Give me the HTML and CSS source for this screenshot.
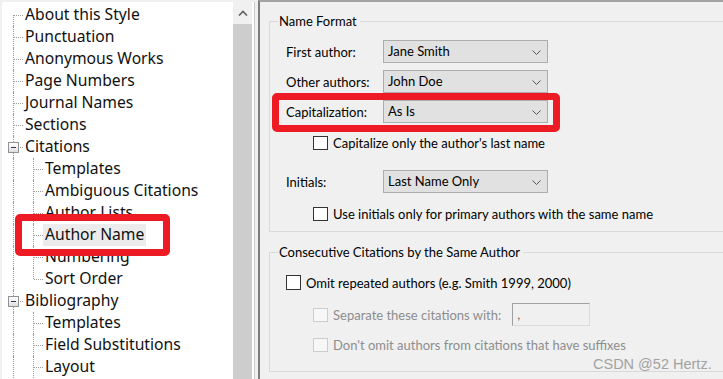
FILE: index.html
```html
<!DOCTYPE html>
<html lang="en">
<head>
    <meta charset="UTF-8">
    <title>Style Editor - Author Name</title>
    <link rel="stylesheet" href="styles.css">
</head>
<body>
    <div class="app">
        <div class="nav">
            <ul class="tree">
                <li class="node"><span class="cell tee first"></span><span class="label">About this Style</span></li>
                <li class="node"><span class="cell tee"></span><span class="label">Punctuation</span></li>
                <li class="node"><span class="cell tee"></span><span class="label">Anonymous Works</span></li>
                <li class="node"><span class="cell tee"></span><span class="label">Page Numbers</span></li>
                <li class="node"><span class="cell tee"></span><span class="label">Journal Names</span></li>
                <li class="node"><span class="cell tee"></span><span class="label">Sections</span></li>
                <li class="node"><span class="cell tee"><span class="expander"></span></span><span class="label">Citations</span></li>
                <li class="node"><span class="cell pass"></span><span class="cell tee"></span><span class="label">Templates</span></li>
                <li class="node"><span class="cell pass"></span><span class="cell tee"></span><span class="label">Ambiguous Citations</span></li>
                <li class="node"><span class="cell pass"></span><span class="cell tee"></span><span class="label">Author Lists</span></li>
                <li class="node"><span class="cell pass"></span><span class="cell tee"></span><span class="label selected">Author Name</span></li>
                <li class="node"><span class="cell pass"></span><span class="cell tee"></span><span class="label">Numbering</span></li>
                <li class="node"><span class="cell pass"></span><span class="cell tee last"></span><span class="label">Sort Order</span></li>
                <li class="node"><span class="cell tee"><span class="expander"></span></span><span class="label">Bibliography</span></li>
                <li class="node"><span class="cell pass"></span><span class="cell tee"></span><span class="label">Templates</span></li>
                <li class="node"><span class="cell pass"></span><span class="cell tee"></span><span class="label">Field Substitutions</span></li>
                <li class="node"><span class="cell pass"></span><span class="cell tee"></span><span class="label">Layout</span></li>
            </ul>
            <div class="scrollbar">
                <div class="scroll-up">
                    <svg width="10" height="6" viewBox="0 0 10 6"><polyline points="1,5.5 5,1.5 9,5.5" fill="none" stroke="#606060" stroke-width="1.6"/></svg>
                </div>
                <div class="scroll-thumb"></div>
            </div>
            <div class="mark mark-tree"></div>
        </div>

        <div class="splitter"></div>

        <main class="pane">
            <section class="group group-name">
                <div class="group-title">Name Format</div>
                <div class="field first-field">
                    <span class="field-label">First author:</span>
                    <div class="select">Jane Smith<svg class="chev" width="9" height="5" viewBox="0 0 9 5"><polyline points="0.5,0.5 4.5,4.5 8.5,0.5" fill="none" stroke="#555" stroke-width="1"/></svg></div>
                </div>
                <div class="field">
                    <span class="field-label">Other authors:</span>
                    <div class="select">John Doe<svg class="chev" width="9" height="5" viewBox="0 0 9 5"><polyline points="0.5,0.5 4.5,4.5 8.5,0.5" fill="none" stroke="#555" stroke-width="1"/></svg></div>
                </div>
                <div class="field">
                    <span class="field-label">Capitalization:</span>
                    <div class="select">As Is<svg class="chev" width="9" height="5" viewBox="0 0 9 5"><polyline points="0.5,0.5 4.5,4.5 8.5,0.5" fill="none" stroke="#555" stroke-width="1"/></svg></div>
                </div>
                <label class="check check-cap indent"><span class="box"></span>Capitalize only the author's last name</label>
                <div class="field field-initials">
                    <span class="field-label">Initials:</span>
                    <div class="select">Last Name Only<svg class="chev" width="9" height="5" viewBox="0 0 9 5"><polyline points="0.5,0.5 4.5,4.5 8.5,0.5" fill="none" stroke="#555" stroke-width="1"/></svg></div>
                </div>
                <label class="check check-init indent"><span class="box"></span>Use initials only for primary authors with the same name</label>
            </section>

            <section class="group group-consec">
                <div class="group-title">Consecutive Citations by the Same Author</div>
                <label class="check check-omit"><span class="box big"></span>Omit repeated authors (e.g. Smith 1999, 2000)</label>
                <div class="check-row indent">
                    <label class="check disabled"><span class="box"></span>Separate these citations with:</label>
                    <div class="text-input">,</div>
                </div>
                <label class="check check-suffix disabled indent"><span class="box"></span>Don't omit authors from citations that have suffixes</label>
            </section>

            <div class="mark mark-cap"></div>
            <div class="watermark">CSDN @52 Hertz.</div>
        </main>
    </div>
</body>
</html>
```

FILE: styles.css
```css
* {
    margin: 0;
    padding: 0;
    box-sizing: border-box;
}

body {
    width: 723px;
    height: 379px;
    overflow: hidden;
    background: #f0f0f0;
    font-family: 'Lato', 'Liberation Sans', sans-serif;
    color: #000;
}

.app {
    display: flex;
    height: 379px;
}

/* left tree */

.nav {
    position: relative;
    display: flex;
    width: 253px;
    margin: 2px 0 0 2px;
    background: #fff;
    border-right: 1px solid #c8c8c8;
}

.tree {
    list-style: none;
    width: 231px;
    padding: 2px 0 0 1px;
    font-family: 'Noto Sans', sans-serif;
    font-size: 15.7px;
    color: #111;
}

.node {
    display: flex;
    align-items: center;
    height: 22px;
}

.cell {
    position: relative;
    width: 20px;
    height: 22px;
    flex-shrink: 0;
}

.cell::before {
    content: '';
    position: absolute;
    left: 10px;
    top: 0;
    bottom: 0;
    border-left: 1px dotted #9a9a9a;
}

.cell.tee::after {
    content: '';
    position: absolute;
    left: 11px;
    width: 9px;
    top: 11px;
    border-top: 1px dotted #9a9a9a;
}

.cell.first::before {
    top: 11px;
}

.cell.last::before {
    bottom: 11px;
}

.expander {
    position: absolute;
    left: 5px;
    top: 6px;
    width: 11px;
    height: 11px;
    border: 1px solid #919191;
    background: linear-gradient(#fff, #dedede);
    z-index: 1;
}

.expander::after {
    content: '';
    position: absolute;
    left: 2px;
    top: 4px;
    width: 5px;
    height: 1px;
    background: #2d3c5a;
}

.label {
    margin-left: 2px;
    padding: 0 2px 0 0;
    height: 22px;
    line-height: 21px;
    white-space: nowrap;
}

.label.selected {
    margin-left: 0;
    padding: 0 2px 0 2px;
    background: #ececec;
}

.scrollbar {
    width: 19px;
    display: flex;
    flex-direction: column;
}

.scroll-up {
    height: 22px;
    background: #f0f0f0;
    display: flex;
    align-items: center;
    justify-content: center;
}

.scroll-thumb {
    flex: 1;
    background: #cdcdcd;
}

.splitter {
    width: 3px;
}

/* right options pane */

.pane {
    position: relative;
    flex: 1;
    border-top: 2px solid #a3a3a3;
    border-left: 2px solid #7d7d7d;
    padding-left: 9px;
    overflow: hidden;
    font-size: 13px;
}

.group {
    display: flex;
    flex-direction: column;
    border: 1px solid #d9d9d9;
    border-right: none;
    padding-left: 16px;
    width: 520px;
}

.group-name {
    margin-top: 19px;
    padding-bottom: 10px;
}

.group-consec {
    margin-top: 20px;
    padding-bottom: 19px;
}

.group-title {
    align-self: flex-start;
    margin: -9px 0 0 -8px;
    padding: 0 3px 0 1px;
    height: 16px;
    line-height: 16px;
    background: #f0f0f0;
}

.field {
    display: flex;
    align-items: center;
    margin-top: 7px;
    height: 23px;
}

.field.first-field {
    margin-top: 11px;
}

.field.field-initials {
    margin-top: 20px;
}

.field-label {
    width: 97px;
}

.select {
    position: relative;
    width: 165px;
    height: 23px;
    line-height: 21px;
    padding-left: 4px;
    background: #e1e1e1;
    border: 1px solid #adadad;
}

.chev {
    position: absolute;
    right: 6px;
    top: 9px;
}

.check {
    display: flex;
    align-items: center;
    height: 15px;
    white-space: nowrap;
}

.indent {
    margin-left: 27px;
}

.check-cap {
    margin-top: 12px;
}

.check-init {
    margin-top: 13px;
}

.check-omit {
    margin-top: 15px;
}

.check-suffix {
    margin-top: 11px;
}

.box {
    width: 15px;
    height: 14px;
    margin-right: 5px;
    background: #fff;
    border: 1px solid #333;
}

.box.big {
    height: 15px;
}

.check.disabled {
    color: #8d8d8d;
}

.check.disabled .box {
    border-color: #cccccc;
    background: #f7f7f7;
}

.check-row {
    display: flex;
    align-items: center;
    margin-top: 13px;
    height: 23px;
}

.text-input {
    margin-left: 11px;
    width: 78px;
    height: 23px;
    padding-left: 4px;
    line-height: 20px;
    color: #6d6d6d;
    background: #f0f0f0;
    border: 1px solid #dcdcdc;
    border-top-color: #a0a0a0;
    border-left-color: #a0a0a0;
}

/* highlight marks drawn on top of the screenshot */

.mark {
    position: absolute;
    border: 7px solid #ed1c24;
    border-radius: 5px;
    pointer-events: none;
}

.mark-tree {
    left: 13px;
    top: 212px;
    width: 155px;
    height: 42px;
}

.mark-cap {
    left: 12px;
    top: 91px;
    width: 288px;
    height: 39px;
}

.watermark {
    position: absolute;
    left: 333px;
    top: 354px;
    font-family: 'Liberation Sans', sans-serif;
    font-size: 14.5px;
    color: #a2a2a2;
}
```
